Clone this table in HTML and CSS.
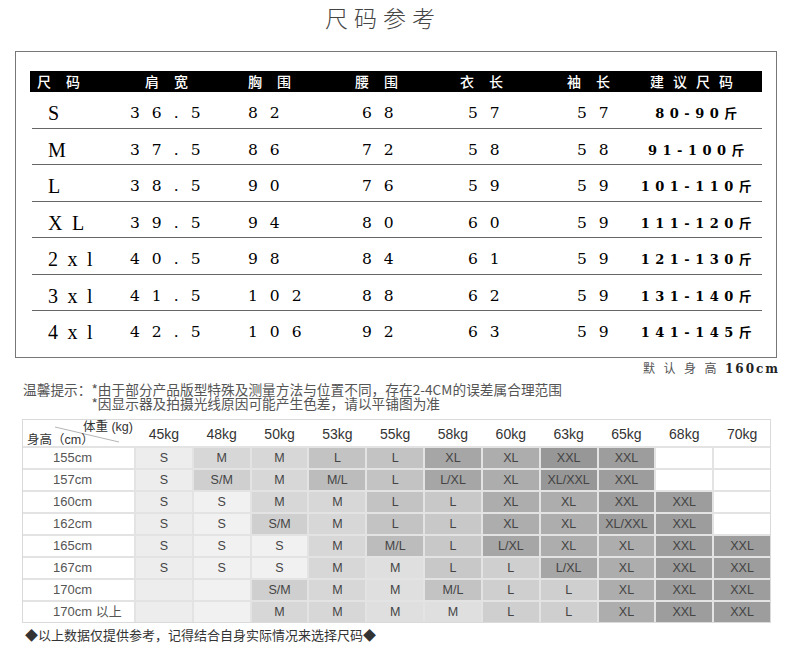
FILE: index.html
```html
<!DOCTYPE html>
<html lang="zh-CN">
<head>
<meta charset="utf-8">
<title>尺码参考</title>
<link rel="stylesheet" href="styles.css">
</head>
<body>
<div class="title">尺码参考</div>

<div class="box">
  <div class="bar">
    <span>尺码</span><span>肩宽</span><span>胸围</span><span>腰围</span><span>衣长</span><span>袖长</span><span class="wide">建议尺码</span>
  </div>
  <div class="row"><span class="sz">S</span><span class="num">36.5</span><span class="num">82</span><span class="num">68</span><span class="num">57</span><span class="num">57</span><span class="wt">80-90斤</span></div>
  <div class="row"><span class="sz">M</span><span class="num">37.5</span><span class="num">86</span><span class="num">72</span><span class="num">58</span><span class="num">58</span><span class="wt">91-100斤</span></div>
  <div class="row"><span class="sz">L</span><span class="num">38.5</span><span class="num">90</span><span class="num">76</span><span class="num">59</span><span class="num">59</span><span class="wt">101-110斤</span></div>
  <div class="row"><span class="sz">XL</span><span class="num">39.5</span><span class="num">94</span><span class="num">80</span><span class="num">60</span><span class="num">59</span><span class="wt">111-120斤</span></div>
  <div class="row"><span class="sz">2xl</span><span class="num">40.5</span><span class="num">98</span><span class="num">84</span><span class="num">61</span><span class="num">59</span><span class="wt">121-130斤</span></div>
  <div class="row"><span class="sz">3xl</span><span class="num">41.5</span><span class="num">102</span><span class="num">88</span><span class="num">62</span><span class="num">59</span><span class="wt">131-140斤</span></div>
  <div class="row"><span class="sz">4xl</span><span class="num">42.5</span><span class="num">106</span><span class="num">92</span><span class="num">63</span><span class="num">59</span><span class="wt">141-145斤</span></div>
</div>

<div class="meta"><span class="cn">默认身高</span><span class="v">160cm</span></div>

<div class="notes">
  <div class="label">温馨提示：</div>
  <div class="lines">
    <div>*由于部分产品版型特殊及测量方法与位置不同，存在2-4CM的误差属合理范围</div>
    <div>*因显示器及拍摄光线原因可能产生色差，请以平铺图为准</div>
  </div>
</div>

<div class="grid">
  <div class="ghead">
    <div class="corner">
      <svg class="diag" width="111" height="27" viewBox="0 0 111 27"><line x1="32" y1="7" x2="96" y2="22" stroke="#b5b5b5" stroke-width="1"/></svg>
      <span class="wlab">体重 (kg)</span>
      <span class="hlab">身高（cm）</span>
    </div>
    <span>45kg</span><span>48kg</span><span>50kg</span><span>53kg</span><span>55kg</span><span>58kg</span><span>60kg</span><span>63kg</span><span>65kg</span><span>68kg</span><span>70kg</span>
  </div>

  <div class="h">155cm</div>
  <div class="c k0">S</div><div class="c k2">M</div><div class="c k2">M</div><div class="c k4">L</div><div class="c k4">L</div><div class="c k7">XL</div><div class="c k6">XL</div><div class="c k9">XXL</div><div class="c k8">XXL</div><div class="c kw"></div><div class="c kw"></div>

  <div class="h">157cm</div>
  <div class="c k0">S</div><div class="c k3">S/M</div><div class="c k2">M</div><div class="c k5">M/L</div><div class="c k4">L</div><div class="c k7">L/XL</div><div class="c k6">XL</div><div class="c k9">XL/XXL</div><div class="c k8">XXL</div><div class="c kw"></div><div class="c kw"></div>

  <div class="h">160cm</div>
  <div class="c k0">S</div><div class="c k00">S</div><div class="c k2">M</div><div class="c k2">M</div><div class="c k4">L</div><div class="c k4b">L</div><div class="c k6">XL</div><div class="c k6">XL</div><div class="c k8">XXL</div><div class="c k8">XXL</div><div class="c kw"></div>

  <div class="h">162cm</div>
  <div class="c k0">S</div><div class="c k00">S</div><div class="c k3">S/M</div><div class="c k2">M</div><div class="c k4">L</div><div class="c k4b">L</div><div class="c k6">XL</div><div class="c k6">XL</div><div class="c k8">XL/XXL</div><div class="c k8">XXL</div><div class="c kw"></div>

  <div class="h">165cm</div>
  <div class="c k0">S</div><div class="c k00">S</div><div class="c k00">S</div><div class="c k2">M</div><div class="c k5">M/L</div><div class="c k4b">L</div><div class="c k7">L/XL</div><div class="c k6">XL</div><div class="c k6">XL</div><div class="c k8">XXL</div><div class="c k8">XXL</div>

  <div class="h">167cm</div>
  <div class="c k0">S</div><div class="c k00">S</div><div class="c k00">S</div><div class="c k2">M</div><div class="c k1">M</div><div class="c k4b">L</div><div class="c k3">L</div><div class="c k7">L/XL</div><div class="c k6">XL</div><div class="c k8">XXL</div><div class="c k8">XXL</div>

  <div class="h">170cm</div>
  <div class="c k0"></div><div class="c k00"></div><div class="c k3">S/M</div><div class="c k2">M</div><div class="c k1">M</div><div class="c k4">M/L</div><div class="c k3">L</div><div class="c k3">L</div><div class="c k6">XL</div><div class="c k8">XXL</div><div class="c k8">XXL</div>

  <div class="h">170cm 以上</div>
  <div class="c k0"></div><div class="c k00"></div><div class="c k2">M</div><div class="c k2">M</div><div class="c k1">M</div><div class="c k1">M</div><div class="c k3">L</div><div class="c k3">L</div><div class="c k6">XL</div><div class="c k8">XXL</div><div class="c k8">XXL</div>
</div>

<div class="foot">◆以上数据仅提供参考，记得结合自身实际情况来选择尺码◆</div>
</body>
</html>
```

FILE: styles.css
```css
body {
  margin: 0;
  width: 790px;
  background: #fff;
  font-family: "Liberation Sans", "Noto Sans CJK SC", sans-serif;
}

.title {
  height: 51px;
  box-sizing: border-box;
  padding: 3px 0 0 325px;
  font-family: "Noto Sans CJK SC", sans-serif;
  font-weight: 300;
  font-size: 23px;
  line-height: 28px;
  letter-spacing: 6px;
  color: #444;
  white-space: nowrap;
}

.box {
  margin-left: 15px;
  width: 762px;
  box-sizing: border-box;
  border: 1px solid #777;
  padding: 19px 14px 9px;
}

.bar {
  display: grid;
  grid-template-columns: 108px 103px 107px 105px 107px 83px 1fr;
  height: 21px;
  padding-left: 7px;
  background: #000;
  color: #fff;
  font-family: "Noto Sans CJK SC", sans-serif;
  font-weight: 500;
  font-size: 14px;
  line-height: 21px;
  letter-spacing: 15px;
  white-space: nowrap;
}

.bar .wide {
  letter-spacing: 9px;
}

.row {
  display: grid;
  grid-template-columns: 98px 118px 114px 106px 109px 63px 1fr;
  height: 36.5px;
  box-sizing: border-box;
  margin-left: 2px;
  padding-top: 7px;
  line-height: 29px;
  border-bottom: 1px solid #666;
  color: #000;
  white-space: nowrap;
}

.row:last-child {
  border-bottom: none;
}

.sz {
  padding-left: 16px;
  font-family: "Liberation Serif", serif;
  font-size: 20px;
  letter-spacing: 9.5px;
}

.num {
  font-family: "DejaVu Serif", serif;
  font-size: 15.5px;
  letter-spacing: 12px;
}

.wt {
  text-align: center;
  padding-right: 4px;
  font-family: "DejaVu Serif", "Noto Sans CJK SC", serif;
  font-weight: bold;
  font-size: 13px;
  letter-spacing: 5.5px;
}

.meta {
  margin-top: 3px;
  padding-right: 10px;
  text-align: right;
  line-height: 14px;
  white-space: nowrap;
}

.meta .cn {
  font-family: "Noto Sans CJK SC", sans-serif;
  font-size: 12px;
  letter-spacing: 8.5px;
  color: #555;
}

.meta .v {
  font-family: "DejaVu Serif", serif;
  font-weight: bold;
  font-size: 12px;
  letter-spacing: 2px;
  color: #222;
}

.notes {
  display: flex;
  margin: 6px 0 0 23px;
  font-family: "Noto Sans CJK SC", sans-serif;
  font-size: 13.7px;
  line-height: 14px;
  color: #555;
  white-space: nowrap;
}

.grid {
  display: grid;
  grid-template-columns: 111px repeat(11, 1fr);
  grid-template-rows: 26px repeat(8, 20px);
  gap: 2px;
  width: 749px;
  box-sizing: border-box;
  margin: 9px 0 0 22px;
  border: 1px solid #dadada;
  background: #e3e3e3;
}

.ghead {
  grid-column: 1 / -1;
  display: grid;
  grid-template-columns: 111px repeat(11, 1fr);
  column-gap: 2px;
  height: 26px;
  background: #fff;
  font-size: 14px;
  line-height: 29px;
  text-align: center;
  color: #333;
}

.corner {
  position: relative;
  display: flex;
  flex-direction: column;
  padding: 1px 1px 0 4px;
  font-size: 12.5px;
  line-height: 13px;
  text-align: left;
  white-space: nowrap;
}

.diag {
  position: absolute;
  left: 0;
  top: 0;
}

.wlab {
  align-self: flex-end;
  position: relative;
}

.hlab {
  position: relative;
}

.h {
  background: #fff;
  padding-left: 30px;
  font-size: 13px;
  line-height: 20px;
  color: #555;
  white-space: nowrap;
}

.c {
  text-align: center;
  font-size: 12.5px;
  line-height: 20px;
  color: #444;
  white-space: nowrap;
}

.kw { background: #fff; }
.k00 { background: #f1f1f1; }
.k0 { background: #ededed; }
.k1 { background: #dfdfdf; }
.k2 { background: #d7d7d7; }
.k3 { background: #cfcfcf; }
.k4b { background: #c8c8c8; }
.k4 { background: #c3c3c3; }
.k5 { background: #bcbcbc; }
.k6 { background: #adadad; }
.k7 { background: #a6a6a6; }
.k8 { background: #9d9d9d; }
.k9 { background: #979797; }

.foot {
  margin: 4px 0 0 25px;
  font-family: "Noto Sans CJK SC", sans-serif;
  font-size: 13px;
  line-height: 16px;
  color: #333;
}
```
